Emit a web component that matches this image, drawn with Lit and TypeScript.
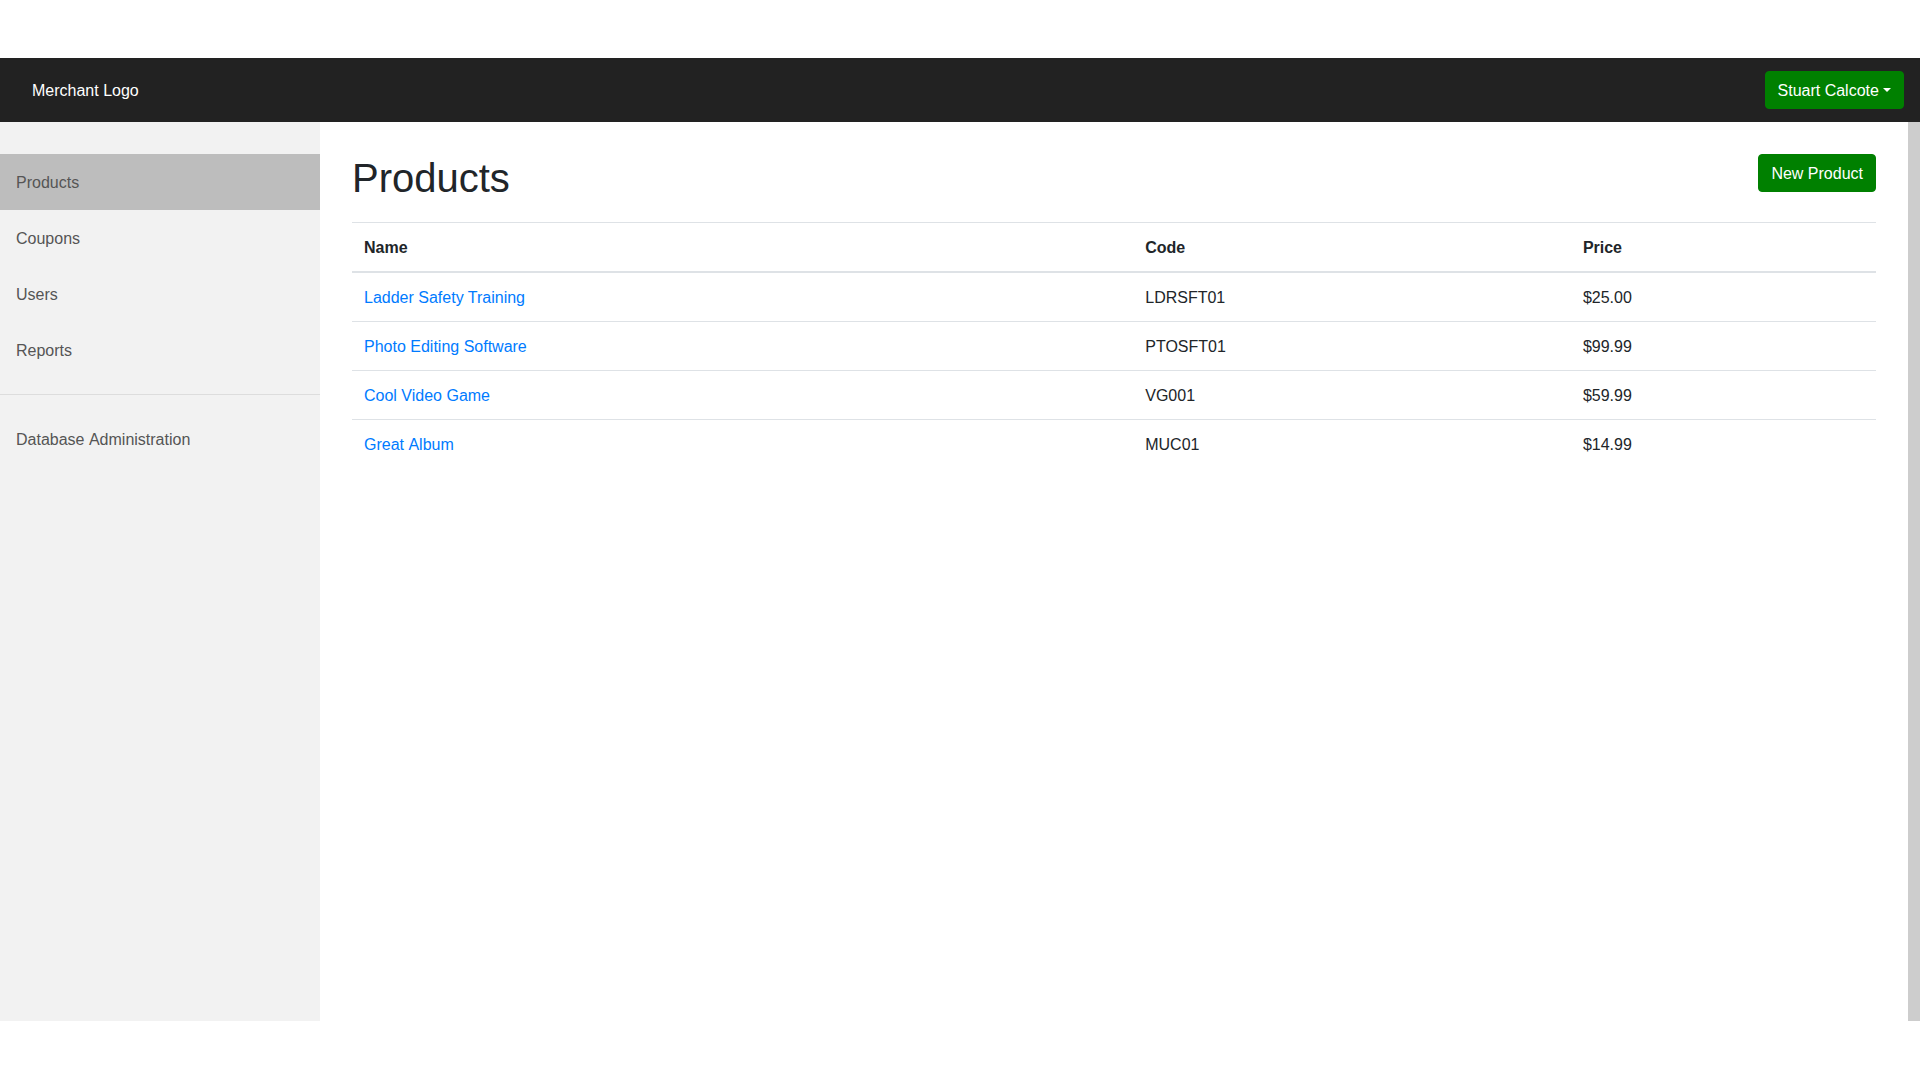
import { LitElement, html, css } from "lit";
import { customElement } from "lit/decorators.js";

const NAV = ["Products", "Coupons", "Users", "Reports"];
const ROWS = [
  ["Ladder Safety Training", "LDRSFT01", "$25.00"],
  ["Photo Editing Software", "PTOSFT01", "$99.99"],
  ["Cool Video Game", "VG001", "$59.99"],
  ["Great Album", "MUC01", "$14.99"],
];

@customElement("app-root")
export class AppRoot extends LitElement {
  static styles = css`
    :host {
      display: block;
      padding-top: 58px;
      font-family: "Liberation Sans", Arial, sans-serif;
      font-size: 16px;
      line-height: 24px;
      color: #212529;
      background: #fff;
    }
    * { box-sizing: border-box; }
    .navbar {
      height: 64px;
      background: #222;
      display: flex;
      align-items: center;
      justify-content: space-between;
      padding: 0 16px 0 32px;
      color: #fff;
    }
    .brand { padding-top: 2px; }
    .btn {
      display: inline-block;
      height: 38px;
      padding: 7px 12px;
      border: 1px solid #008000;
      border-radius: 4px;
      background: #008000;
      color: #fff;
      font: inherit;
      line-height: 24px;
    }
    .caret {
      display: inline-block;
      margin-left: 4.08px;
      vertical-align: 4.08px;
      border-top: 4.8px solid #fff;
      border-left: 4.8px solid transparent;
      border-right: 4.8px solid transparent;
    }
    .body {
      display: flex;
      height: 899px;
    }
    .sidebar {
      width: 320px;
      flex: none;
      background: #f2f2f2;
      padding-top: 32px;
    }
    .item {
      display: block;
      height: 56px;
      padding: 17px 16px 15px;
      color: #555;
      text-decoration: none;
    }
    .item.active { background: #bdbdbd; }
    hr {
      margin: 16px 0;
      border: 0;
      border-top: 1px solid #ddd;
    }
    .content {
      flex: 1;
      min-width: 0;
      padding: 32px;
    }
    .head {
      display: flex;
      justify-content: space-between;
      align-items: flex-start;
      margin-bottom: 20px;
    }
    h1 {
      margin: 0;
      font-size: 40px;
      font-weight: 500;
      line-height: 48px;
    }
    table {
      width: 100%;
      border-collapse: collapse;
    }
    th, td {
      padding: 13px 12px 11px;
      text-align: left;
      vertical-align: top;
      border-top: 1px solid #dee2e6;
    }
    th {
      font-weight: 700;
      vertical-align: bottom;
      border-bottom: 2px solid #dee2e6;
    }
    a.link { color: #007bff; text-decoration: none; }
    .wide-space { word-spacing: 0.87px; }
    .scrollbar {
      width: 12px;
      flex: none;
      background: #cdcdcd;
    }
  `;

  render() {
    return html`
      <div class="navbar">
        <span class="brand">Merchant Logo</span>
        <button class="btn">Stuart Calcote<span class="caret"></span></button>
      </div>
      <div class="body">
        <nav class="sidebar">
          ${NAV.map(
            (n, i) => html`<a class="item ${i === 0 ? "active" : ""}" href="#">${n}</a>`
          )}
          <hr />
          <a class="item wide-space" href="#">Database Administration</a>
        </nav>
        <main class="content">
          <div class="head">
            <h1>Products</h1>
            <button class="btn">New Product</button>
          </div>
          <table>
            <thead>
              <tr><th>Name</th><th>Code</th><th>Price</th></tr>
            </thead>
            <tbody>
              ${ROWS.map(
                (r) => html`<tr>
                  <td><a class="link ${r[0].includes(" A") ? "wide-space" : ""}" href="#">${r[0]}</a></td>
                  <td>${r[1]}</td>
                  <td>${r[2]}</td>
                </tr>`
              )}
            </tbody>
          </table>
        </main>
        <div class="scrollbar"></div>
      </div>
    `;
  }
}
